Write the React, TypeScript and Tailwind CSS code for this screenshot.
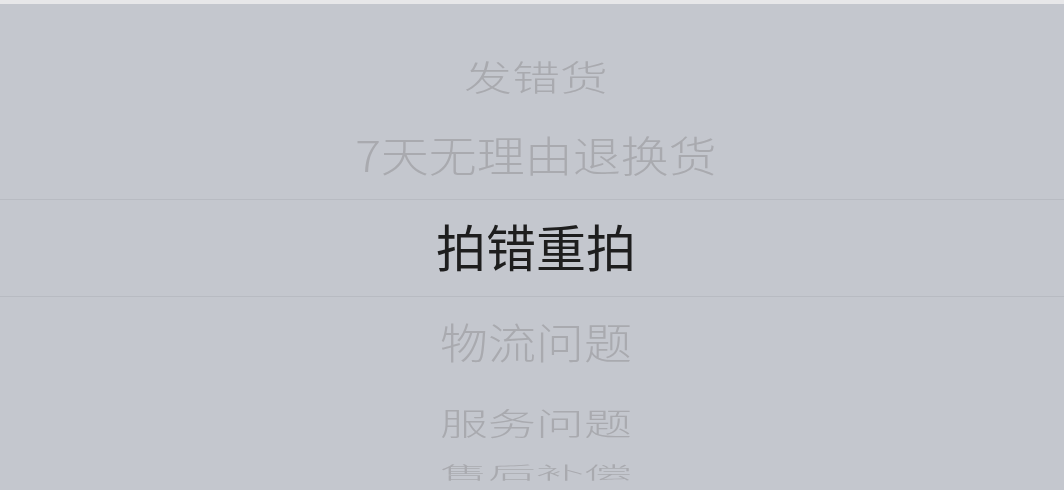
const font = { fontFamily: '"Noto Sans CJK SC", "Noto Sans", sans-serif' }

export default function App() {
  return (
    <div className="flex h-[490px] w-[1064px] flex-col overflow-hidden bg-[#c4c7ce] pl-[8px]" style={font}>
      <div className="-ml-[8px] h-1 bg-[#e7e7e9]" />
      <div className="h-[32px]" />
      <div className="flex h-[78px] items-center justify-center">
        <div className="text-[48px] font-light leading-none text-[#a9aaaf] scale-y-[0.74]">发错货</div>
      </div>
      <div className="flex h-[80px] items-center justify-center">
        <div className="text-[48px] font-light leading-none text-[#a9aaaf] scale-y-[0.88]">7天无理由退换货</div>
      </div>
      <div className="h-[5px]" />
      {/* selected row */}
      <div className="-ml-[8px] flex h-[98px] items-center justify-center border-y border-[#b8bbc2] pb-[6px] pl-[8px]">
        <div className="text-[50px] leading-none text-[#1e1e1e]">拍错重拍</div>
      </div>
      <div className="flex h-[88px] items-center justify-center">
        <div className="text-[48px] font-light leading-none text-[#a9aaaf] scale-y-[0.88]">物流问题</div>
      </div>
      <div className="flex h-[72px] items-center justify-center">
        <div className="text-[48px] font-light leading-none text-[#a9aaaf] scale-y-[0.65]">服务问题</div>
      </div>
      <div className="flex h-[30px] items-center justify-center">
        <div className="text-[48px] font-light leading-none text-[#a9aaaf] scale-y-[0.35] blur-[0.4px]">售后补偿</div>
      </div>
    </div>
  )
}
